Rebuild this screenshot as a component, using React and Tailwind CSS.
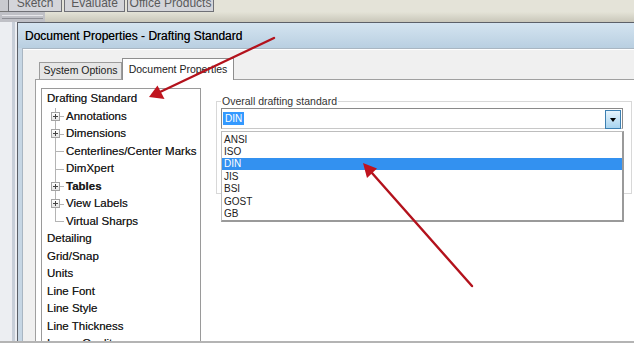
import React from 'react';

const tree = [
  { label: 'Drafting Standard', level: 0 },
  { label: 'Annotations', level: 1, plus: true },
  { label: 'Dimensions', level: 1, plus: true },
  { label: 'Centerlines/Center Marks', level: 1 },
  { label: 'DimXpert', level: 1 },
  { label: 'Tables', level: 1, plus: true, bold: true },
  { label: 'View Labels', level: 1, plus: true },
  { label: 'Virtual Sharps', level: 1, last: true },
  { label: 'Detailing', level: 0 },
  { label: 'Grid/Snap', level: 0 },
  { label: 'Units', level: 0 },
  { label: 'Line Font', level: 0 },
  { label: 'Line Style', level: 0 },
  { label: 'Line Thickness', level: 0 },
  { label: 'Image Quality', level: 0 },
];

const standards = ['ANSI', 'ISO', 'DIN', 'JIS', 'BSI', 'GOST', 'GB'];

function PlusBox() {
  return (
    <span className="absolute left-[9px] top-[4px] w-[9px] h-[9px] border border-[#a3a3a3] bg-gradient-to-b from-white to-[#e4e4e4] flex items-center justify-center">
      <span className="absolute w-[5px] h-px bg-[#444]" />
      <span className="absolute w-px h-[5px] bg-[#444]" />
    </span>
  );
}

function TreeRow({ item }) {
  if (item.level === 0) {
    return (
      <div className="h-[17.5px] flex items-center pl-[5px] text-[11.5px] text-[#1c1c1c] whitespace-nowrap [text-shadow:0_0_0.3px_#666]">
        {item.label}
      </div>
    );
  }
  return (
    <div className="relative h-[17.5px] flex items-center pl-[24px] text-[11.5px] text-[#1c1c1c] whitespace-nowrap [text-shadow:0_0_0.3px_#666]">
      {/* connector lines */}
      <span className={`absolute left-[13px] top-0 w-px bg-[#b4b4b4] ${item.last ? 'h-[9px]' : 'h-full'}`} />
      <span className="absolute left-[13px] top-[8.5px] w-[9px] h-px bg-[#b4b4b4]" />
      {item.plus && <PlusBox />}
      <span className={item.bold ? 'font-semibold' : ''}>{item.label}</span>
    </div>
  );
}

function Arrows() {
  return (
    <svg className="absolute inset-0 z-50 pointer-events-none" width="634" height="343">
      <line x1="274" y1="38" x2="160" y2="92" stroke="#b3121c" strokeWidth="2.4" strokeLinecap="round" />
      <polygon points="149,97 157.5,85.5 164.5,99" fill="#c0141e" />
      <line x1="472" y1="286" x2="372" y2="173" stroke="#b3121c" strokeWidth="2.4" strokeLinecap="round" />
      <polygon points="363,163 377,168.5 367,178" fill="#c0141e" />
    </svg>
  );
}

export default function App() {
  return (
    <div className="relative w-[634px] h-[343px] overflow-hidden bg-[#e9ebef] border-b-2 border-[#b4b4b4] font-['Liberation_Sans',Arial,sans-serif] flex flex-col">
      {/* toolbar tabs (cut off at the top of the capture) */}
      <div className="h-[12px] flex bg-[#e4e3d8] shrink-0">
        <div className="w-[8px] bg-[#c9cacf] border-b border-[#777]" />
        {['Sketch', 'Evaluate', 'Office Products'].map((t, i) => (
          <div
            key={t}
            className={`h-[12px] overflow-hidden border-x border-b border-[#6f7076] bg-[#d4d5da] mr-[2px] ${i === 0 ? 'w-[54px]' : i === 1 ? 'w-[61px]' : 'w-[87px]'}`}
          >
            <div className="h-[20px] -mt-[7px] flex items-center justify-center text-[12px] text-[#5a5a5a]">{t}</div>
          </div>
        ))}
      </div>
      <div className="h-[10px] flex shrink-0">
        <div className="w-[45px] bg-[#bfc0c6] flex flex-col justify-center gap-[2px] px-[2px]">
          <div className="h-px bg-[#e6e6ea]" />
          <div className="h-px bg-[#8d8e95]" />
        </div>
        <div className="flex-1 bg-gradient-to-b from-[#e4e3d7] to-[#c9c7ba]" />
      </div>

      <div className="flex-1 flex min-h-0">
        {/* left strip */}
        <div className="w-[17px] shrink-0 flex bg-[#eceef2]">
          <div className="w-[12px]" />
          <div className="w-[3px] bg-[#c7ced8]" />
        </div>

        {/* dialog */}
        <div className="flex-1 flex flex-col border-l border-t border-[#5c6068] bg-[#c6d6e4] min-w-0">
          <div className="h-[25px] shrink-0 flex items-center pl-[7px] bg-gradient-to-b from-[#d4e4f0] to-[#b9cfe1] text-[12px] text-black whitespace-nowrap [text-shadow:0_0_0.3px_#555]">
            Document Properties - Drafting Standard
          </div>
          <div className="flex-1 flex flex-col ml-[4px] border-l border-t border-[#a9b6c2] bg-[#f0f0f0] min-h-0">
            {/* tab strip */}
            <div className="h-[30px] shrink-0 flex items-end pl-[16px] border-t border-white">
              <div className="h-[17px] w-[83px] border border-b-0 border-[#9c9c9c] bg-[#e6e6e6] flex items-center justify-center text-[10.5px] text-[#222] whitespace-nowrap">
                System Options
              </div>
              <div className="h-[22px] w-[112px] border border-b-0 border-[#8e8e8e] bg-white flex items-center justify-center text-[10.5px] text-[#222] whitespace-nowrap -mb-px relative z-10">
                Document Properties
              </div>
              <div className="flex-1" />
            </div>
            {/* tab panel */}
            <div className="flex-1 flex ml-[12px] border-l border-t border-[#a0a0a0] bg-white pl-[5px] pt-[8px] min-h-0">
              <div className="w-[160px] h-[280px] shrink-0 border border-[#9a9a9a] pt-px">
                {tree.map((item) => (
                  <TreeRow key={item.label} item={item} />
                ))}
              </div>

              <div className="flex-1 pl-[15px] pt-[6px] min-w-0">
                {/* group box */}
                <div className="relative w-[416px] h-[93px] border border-[#d8d8d8] mt-[7px] shadow-[inset_1px_1px_0_#fff]">
                  <div className="absolute -top-[8px] left-[4px] bg-white px-px text-[10.5px] text-[#333] leading-[14px] whitespace-nowrap">
                    Overall drafting standard
                  </div>
                  {/* combo box */}
                  <div className="relative mt-[6px] ml-[4px] w-[402px] h-[21px] border border-[#8a8a8a] border-b-[#c8c8c8] bg-white flex items-center pl-[1px]">
                    <div className="h-[13px] px-[2px] bg-[#3399ff] text-white text-[10px] leading-[13px]">DIN</div>
                    <div className="absolute right-px top-px w-[16px] h-[19px] border border-[#3c7fb1] bg-gradient-to-b from-[#e6f4fc] to-[#a8d4f0] flex items-center justify-center">
                      <span className="w-0 h-0 border-x-[3px] border-x-transparent border-t-[4px] border-t-black" />
                    </div>
                  </div>
                  {/* open list */}
                  <div className="absolute left-[4px] top-[29px] z-20 w-[403px] h-[91px] bg-white border border-[#bdbdbd] border-r-2 border-b-2 border-r-[#9a9a9a] border-b-[#9a9a9a] pt-[1px]">
                    {standards.map((s) => (
                      <div
                        key={s}
                        className={`h-[12.4px] flex items-center pl-[2px] text-[10px] ${s === 'DIN' ? 'bg-[#3391f0] text-white' : 'text-[#222]'}`}
                      >
                        {s}
                      </div>
                    ))}
                  </div>
                </div>
              </div>
            </div>
          </div>
        </div>
      </div>

      <Arrows />
    </div>
  );
}
